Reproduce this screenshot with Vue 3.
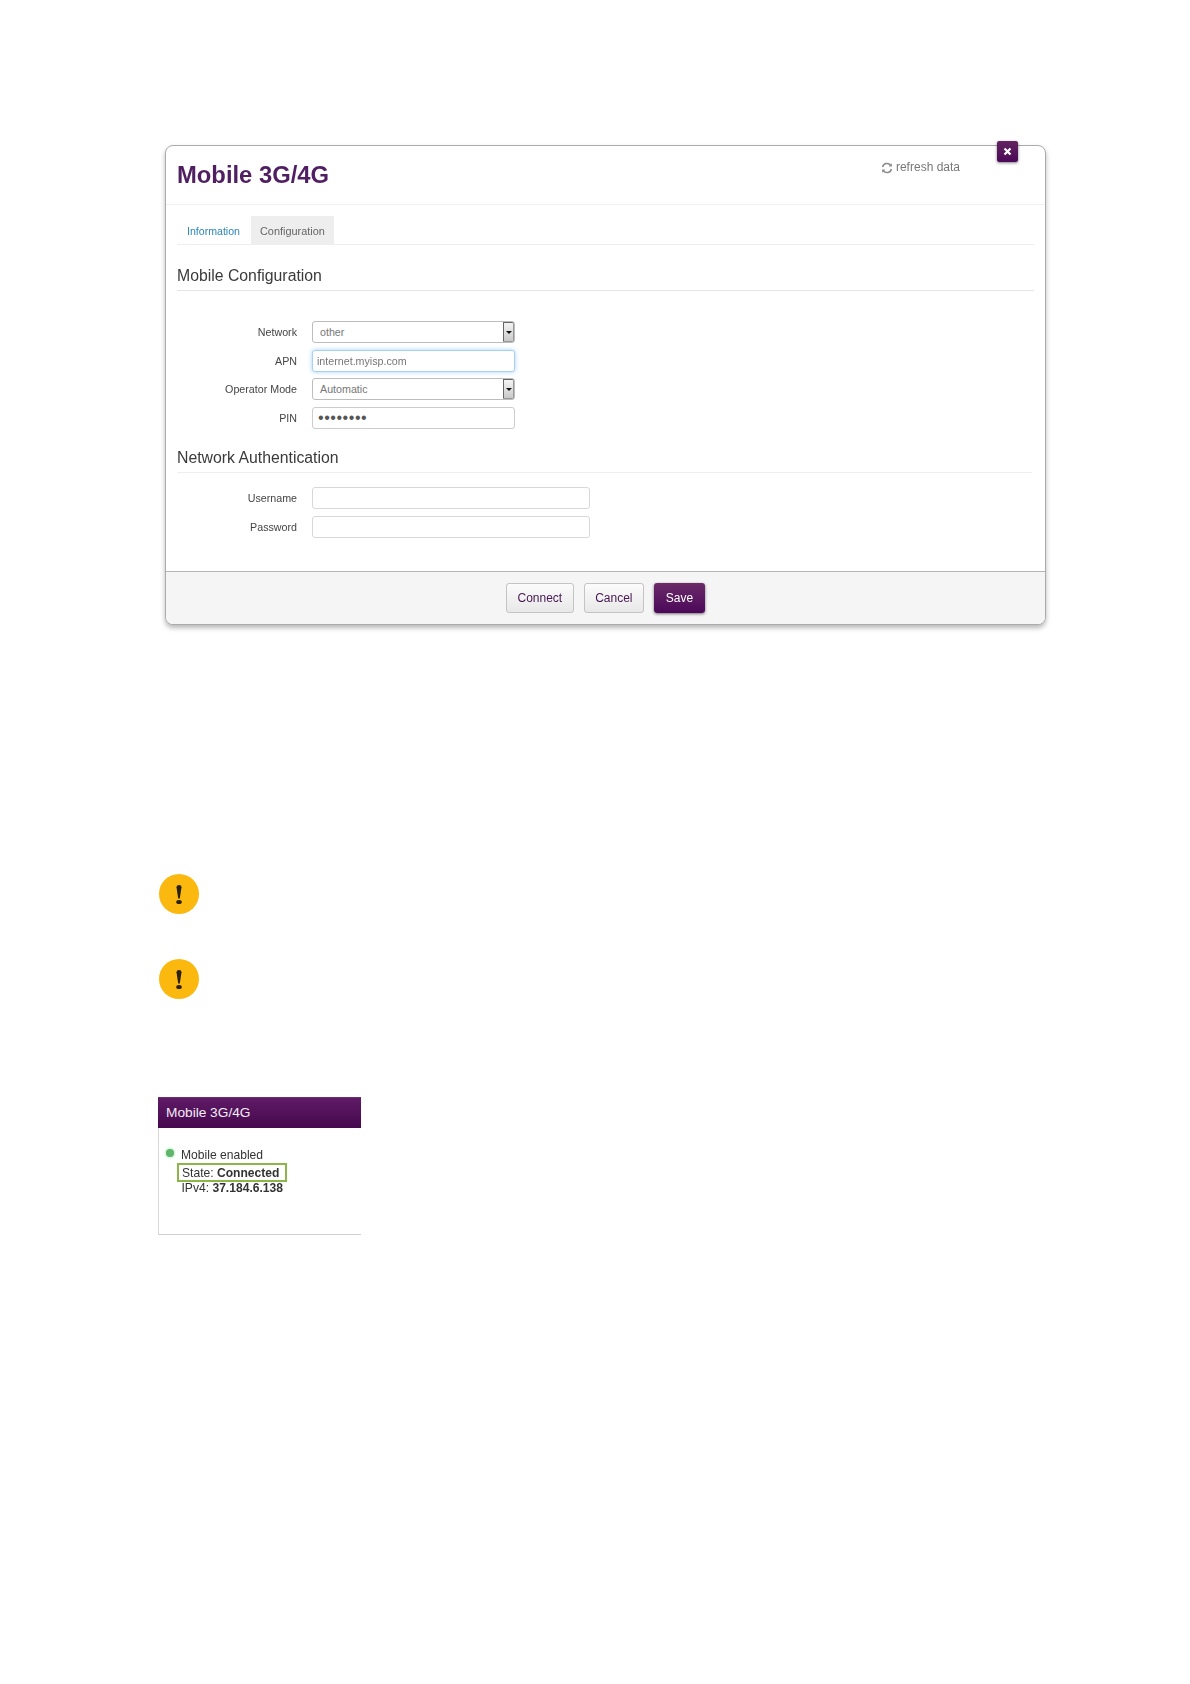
<script setup>
const configRows = [
  { label: 'Network', kind: 'select', value: 'other' },
  { label: 'APN', kind: 'focus', value: 'internet.myisp.com' },
  { label: 'Operator Mode', kind: 'select', value: 'Automatic' },
  { label: 'PIN', kind: 'pin', value: '••••••••' },
]
const authRows = ['Username', 'Password']
</script>

<template>
  <div class="page">
    <section class="modal">
      <button class="close" aria-label="close">
        <svg width="9" height="9" viewBox="0 0 9 9"><path d="M1.5 1.5l6 6M7.5 1.5l-6 6" stroke="#fff" stroke-width="2.2" fill="none"/></svg>
      </button>
      <header class="modal-head">
        <h1>Mobile 3G/4G</h1>
        <div class="refresh">
          <svg width="12" height="12" viewBox="0 0 12 12" fill="none">
            <path d="M1.6 5A4.5 4.5 0 0 1 9.6 3.2" stroke="#8a8a8a" stroke-width="1.5"/>
            <path d="M10.9 1.2v3.4H7.6z" fill="#8a8a8a"/>
            <path d="M10.4 7A4.5 4.5 0 0 1 2.4 8.8" stroke="#8a8a8a" stroke-width="1.5"/>
            <path d="M1.1 10.8V7.4h3.3z" fill="#8a8a8a"/>
          </svg>
          <span>refresh data</span>
        </div>
      </header>

      <div class="body">
        <nav class="tabs">
          <a class="tab link">Information</a>
          <a class="tab active">Configuration</a>
        </nav>

        <h2 class="section first">Mobile Configuration</h2>
        <div class="form config">
          <div v-for="row in configRows" :key="row.label" class="row">
            <label>{{ row.label }}</label>
            <div class="field short" :class="row.kind">
              <span>{{ row.value }}</span>
              <i v-if="row.kind === 'select'" class="arrow"></i>
            </div>
          </div>
        </div>

        <h2 class="section second">Network Authentication</h2>
        <div class="form auth">
          <div v-for="label in authRows" :key="label" class="row">
            <label>{{ label }}</label>
            <div class="field long"></div>
          </div>
        </div>
      </div>

      <footer class="modal-foot">
        <button class="btn">Connect</button>
        <button class="btn">Cancel</button>
        <button class="btn primary">Save</button>
      </footer>
    </section>

    <div class="notes">
      <div v-for="n in 2" :key="n" class="warn">
        <svg width="40" height="40" viewBox="0 0 40 40">
          <circle cx="20" cy="20" r="20" fill="#fbb80f"/>
          <path d="M17.5 13.2a2.5 2.2 0 0 1 5 0L20.8 24.5h-1.6z" fill="#2a2113"/>
          <ellipse cx="20" cy="28" rx="2.8" ry="2" fill="#2a2113"/>
        </svg>
      </div>
    </div>

    <section class="widget">
      <div class="widget-head">Mobile 3G/4G</div>
      <div class="widget-body">
        <div class="status"><i class="dot"></i><span>Mobile enabled</span></div>
        <div class="state">State: <b>Connected</b></div>
        <div class="ip">IPv4: <b>37.184.6.138</b></div>
      </div>
    </section>
  </div>
</template>

<style>
html, body { margin: 0; background: #fff; }
</style>

<style scoped>
.page {
  width: 1190px;
  height: 1684px;
  box-sizing: border-box;
  padding: 145px 0 0 165px;
  overflow: hidden;
  background: #fff;
  font-family: "Liberation Sans", Arial, sans-serif;
  color: #333;
}
.modal {
  position: relative;
  width: 881px;
  height: 480px;
  box-sizing: border-box;
  display: flex;
  flex-direction: column;
  background: #fff;
  border: 1px solid #ababab;
  border-radius: 8px;
  box-shadow: 0 3px 5px rgba(0, 0, 0, .28);
  filter: blur(.3px);
}
.close {
  position: absolute;
  top: -5px;
  right: 27px;
  width: 21px;
  height: 21px;
  padding: 0;
  border: 0;
  border-radius: 2px;
  display: flex;
  align-items: center;
  justify-content: center;
  background: linear-gradient(#63245f, #4b0a57);
  box-shadow: 0 1px 3px rgba(0, 0, 0, .5);
}
.modal-head {
  height: 59px;
  box-sizing: border-box;
  display: flex;
  justify-content: space-between;
  border-bottom: 1px solid #f1f1f1;
  padding: 0 85px 0 11px;
}
h1 {
  margin: 15px 0 0;
  font-size: 23.8px;
  line-height: 28px;
  font-weight: 700;
  color: #4f1f62;
}
.refresh {
  margin-top: 14px;
  display: flex;
  align-items: flex-start;
  gap: 3px;
  font-size: 12px;
  line-height: 14px;
  color: #777;
}
.refresh svg { margin-top: 2px; }
.body { flex: 1; padding: 11px 11px 0 11px; }
.tabs {
  height: 29px;
  box-sizing: border-box;
  display: flex;
  padding-left: 1px;
  border-bottom: 1px solid #eee;
}
.tab {
  height: 28px;
  box-sizing: border-box;
  padding: 8px 9px 0;
  font-size: 10.6px;
  line-height: 14px;
}
.link { color: #2c86b8; margin-right: 2px; }
.active { background: #eeeeee; color: #666; font-size: 10.9px; }
.section {
  margin: 0;
  font-size: 15.8px;
  font-weight: 400;
  line-height: 18px;
  color: #3a3a3a;
  border-bottom: 1px solid #e6e6e6;
}
.first { margin-top: 22px; padding-bottom: 5px; }
.second { margin-top: 20px; padding-bottom: 5.5px; margin-right: 2px; border-bottom-color: #eee; }
.form { display: flex; flex-direction: column; gap: 6.67px; }
.config { margin-top: 30px; }
.auth { margin-top: 14px; }
.row { display: flex; align-items: center; height: 22px; }
label {
  width: 120px;
  margin-right: 15px;
  text-align: right;
  font-size: 10.7px;
  color: #444;
}
.field {
  position: relative;
  height: 22px;
  box-sizing: border-box;
  border: 1px solid #ccc;
  border-radius: 3px;
  background: #fff;
  font-size: 10.7px;
  line-height: 20px;
  color: #777;
  padding-left: 7px;
}
.short { width: 203px; }
.long { width: 278px; border-color: #d8d8d8; }
.select { border-color: #bdbdbd; }
.focus {
  padding-left: 4px;
  border-color: #a9d0ee;
  box-shadow: 0 0 4px rgba(82, 168, 236, .55);
}
.pin { padding-left: 5px; color: #555; font-size: 16px; line-height: 19px; letter-spacing: .55px; }
.arrow {
  position: absolute;
  top: 0;
  right: 0;
  bottom: 0;
  width: 11px;
  border: 1px solid;
  border-color: #666 #999 #999 #666;
  border-radius: 0 2px 2px 0;
  box-sizing: border-box;
  background: linear-gradient(#f4f4f4, #c9c9c9);
}
.arrow::after {
  content: "";
  position: absolute;
  top: 8px;
  left: 2px;
  border: 3px solid transparent;
  border-top: 3px solid #111;
  border-bottom: 0;
}
.modal-foot {
  height: 53px;
  box-sizing: border-box;
  display: flex;
  justify-content: center;
  align-items: center;
  gap: 10px;
  padding-bottom: 1px;
  background: #f5f5f5;
  border-top: 1px solid #b5b5b5;
  border-radius: 0 0 7px 7px;
}
.btn {
  height: 30px;
  padding: 0 10.5px;
  font: 12px/28px "Liberation Sans", Arial, sans-serif;
  color: #45164f;
  background: linear-gradient(#fbfbfb, #e8e8e8);
  border: 1px solid #c4c4c4;
  border-radius: 3px;
}
.primary {
  color: #fff;
  border: 0;
  background: linear-gradient(#6b2a69, #4b0858);
  box-shadow: 0 1px 3px rgba(0, 0, 0, .55);
  width: 51px;
  padding: 0;
}
.notes { margin-top: 249px; margin-left: -6.5px; display: flex; flex-direction: column; gap: 44.5px; }
.warn { height: 40px; }
.warn svg { display: block; }
.widget {
  margin: 98.5px 0 0 -7px;
  width: 203px;
  height: 138px;
  box-sizing: border-box;
  border-left: 1px solid #d8d8d8;
  border-bottom: 1px solid #cfcfcf;
  font-size: 12.1px;
  line-height: 14px;
  color: #333;
  filter: blur(.3px);
}
.widget-head {
  height: 31px;
  margin-left: -1px;
  box-sizing: border-box;
  padding: 8px 0 0 8px;
  font-size: 13.7px;
  line-height: 16px;
  color: #f4eef5;
  background: linear-gradient(#6f3a72 0, #5f1a66 5%, #45084d 100%);
}
.widget-body { padding: 20px 0 0 22px; position: relative; }
.status { position: relative; }
.dot {
  position: absolute;
  left: -15px;
  top: 1px;
  width: 8px;
  height: 8px;
  border-radius: 50%;
  background: #5fb56b;
  box-shadow: 0 0 3px #7fdc8a;
}
.state {
  margin: 1px 0 0 -4px;
  width: 110px;
  height: 19px;
  box-sizing: border-box;
  border: 2px solid #8db64a;
  padding: 1px 0 0 3px;
  line-height: 14px;
}
.ip { margin: -1px 0 0 .5px; }
</style>
